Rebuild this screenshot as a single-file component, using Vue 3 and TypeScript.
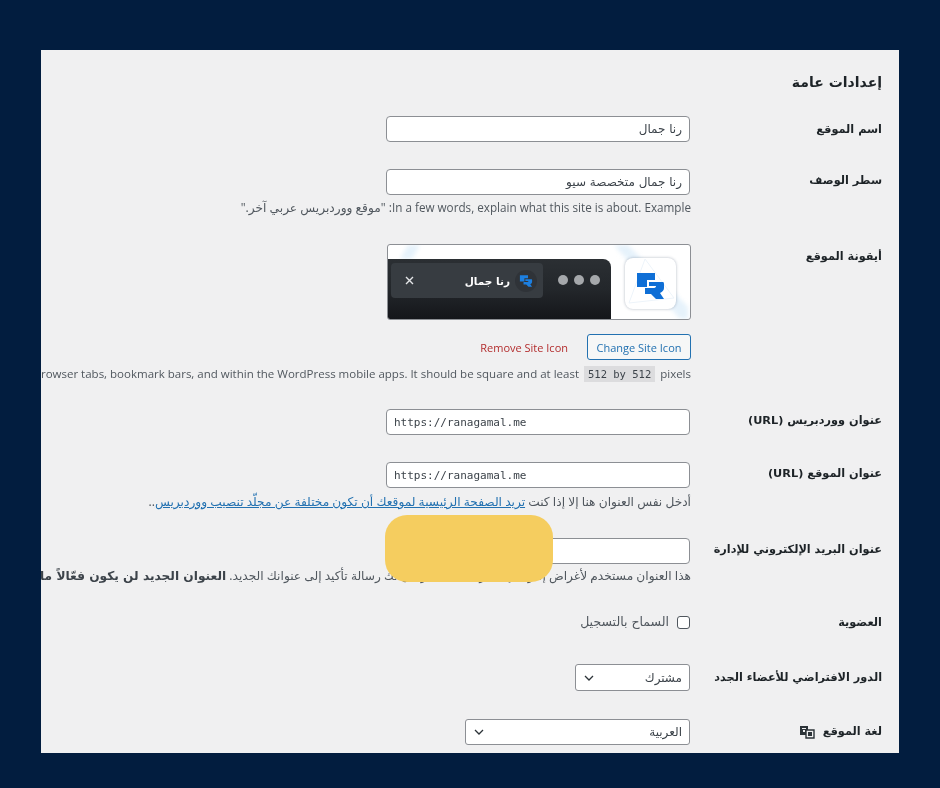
<script setup lang="ts">
const siteUrl = 'https://ranagamal.me'
</script>

<template>
  <div class="page">
    <main class="panel" dir="rtl">
      <h2 class="title">إعدادات عامة</h2>

      <div class="row row-name">
        <label class="label">اسم الموقع</label>
        <div class="field"><input class="input" value="رنا جمال" /></div>
      </div>

      <div class="row row-tagline">
        <label class="label">سطر الوصف</label>
        <div class="field">
          <input class="input" value="رنا جمال متخصصة سيو" />
          <p class="desc"><span class="latin wide">In a few words, explain what this site is about. Example</span>: "موقع ووردبريس عربي آخر."</p>
        </div>
      </div>

      <div class="row row-icon">
        <label class="label">أيقونة الموقع</label>
        <div class="field">
          <div class="preview">
            <svg class="swoosh" width="302" height="74" viewBox="0 0 302 74">
              <path fill="#e6f2fb" d="M20 0h12l-8 14H12zM226 0h14l60 62v12h-8z" />
            </svg>
            <div class="app-icon">
              <svg width="51" height="51" viewBox="0 0 51 51">
                <path fill="none" stroke="#edf4fa" d="M20 1L49 40 4 45z" />
                <path fill="#0f6fd6" d="M12 15H30V22H22V29H12Z" />
                <path fill="#0f6fd6" d="M24 24H38Q39 24 39 26V30Q39 33 35 35L39 41H31L26 36H20V30H28Q31 30 31 28H24Z" />
              </svg>
            </div>
            <div class="browser">
              <div class="dots"><i></i><i></i><i></i></div>
              <div class="tab">
                <span class="fav">
                  <svg width="14" height="14" viewBox="10 13 31 30">
                    <path fill="#1c7fe0" d="M12 15H30V22H22V29H12Z" />
                    <path fill="#1c7fe0" d="M24 24H38Q39 24 39 26V30Q39 33 35 35L39 41H31L26 36H20V30H28Q31 30 31 28H24Z" />
                  </svg>
                </span>
                <span class="tab-title">رنا جمال</span>
                <svg class="close" width="9" height="9" viewBox="0 0 9 9">
                  <path d="M1 1l7 7M8 1L1 8" stroke="#e4e6e8" stroke-width="1.4" fill="none" />
                </svg>
              </div>
            </div>
          </div>
          <div class="actions">
            <button class="btn" type="button">Change Site Icon</button>
            <button class="remove" type="button">Remove Site Icon</button>
          </div>
          <p class="desc desc-icon">
            <span class="latin" dir="ltr">The Site Icon is what you see in browser tabs, bookmark bars, and within the WordPress mobile apps. It should be square and at least <code>512 by 512</code> pixels</span>
          </p>
        </div>
      </div>

      <div class="row row-wp">
        <label class="label">عنوان ووردبريس (URL)</label>
        <div class="field"><input class="input mono" dir="ltr" :value="siteUrl" /></div>
      </div>

      <div class="row row-site">
        <label class="label">عنوان الموقع (URL)</label>
        <div class="field">
          <input class="input mono" dir="ltr" :value="siteUrl" />
          <p class="desc desc-site">أدخل نفس العنوان هنا إلا إذا كنت <a href="#">تريد الصفحة الرئيسية لموقعك أن تكون مختلفة عن مجلّد تنصيب ووردبريس</a>..</p>
        </div>
      </div>

      <div class="row row-email">
        <label class="label">عنوان البريد الإلكتروني للإدارة</label>
        <div class="field">
          <div class="email-wrap">
            <input class="input" />
            <div class="mask"></div>
          </div>
          <p class="desc desc-email">هذا العنوان مستخدم لأغراض إدارية. إذا غيّرت هذا، سنرسل لك رسالة تأكيد إلى عنوانك الجديد. <strong>العنوان الجديد لن يكون فعّالاً ما لم يتم تأكيده.</strong></p>
        </div>
      </div>

      <div class="row row-member">
        <label class="label">العضوية</label>
        <div class="field">
          <label class="check"><span class="box"></span>السماح بالتسجيل</label>
        </div>
      </div>

      <div class="row row-role">
        <label class="label">الدور الافتراضي للأعضاء الجدد</label>
        <div class="field">
          <div class="select select-role">
            <span>مشترك</span>
            <svg width="12" height="12" viewBox="0 0 12 12"><path d="M2 4l4 4 4-4" stroke="#2c3338" stroke-width="1.3" fill="none" /></svg>
          </div>
        </div>
      </div>

      <div class="row row-lang">
        <label class="label">لغة الموقع
          <svg class="lang-icon" width="16" height="14" viewBox="0 0 16 14">
            <path fill="#2c3338" d="M1 1h8v9H1z" />
            <path fill="#f0f0f1" d="M3 3h4v1H3zM4 5h2v2H4z" />
            <path fill="#f0f0f1" stroke="#2c3338" stroke-width="1.4" d="M7 5h8v8H7z" />
            <path fill="#2c3338" d="M9 7h4v4H9z" />
          </svg>
        </label>
        <div class="field">
          <div class="select select-lang">
            <span>العربية</span>
            <svg width="12" height="12" viewBox="0 0 12 12"><path d="M2 4l4 4 4-4" stroke="#2c3338" stroke-width="1.3" fill="none" /></svg>
          </div>
        </div>
      </div>
    </main>
  </div>
</template>

<style>
html, body { margin: 0; background: #021d3f; }
</style>

<style scoped>
.page {
  width: 940px;
  height: 788px;
  padding: 50px 41px 35px;
  box-sizing: border-box;
  background: #021d3f;
  overflow: hidden;
}
.panel {
  height: 703px;
  background: #f0f0f1;
  overflow: hidden;
  padding: 23px 17px 0 0;
  box-sizing: border-box;
  font-family: "Open Sans", "DejaVu Sans", sans-serif;
  color: #3c434a;
  font-size: 12px;
  filter: blur(.3px);
}
.title {
  margin: 0;
  font: 700 14px/19px "DejaVu Sans", sans-serif;
  color: #1d2327;
  height: 19px;
}
.row { display: flex; align-items: flex-start; }
.label {
  width: 192px;
  flex: none;
  font: 700 11.3px/16px "DejaVu Sans", sans-serif;
  color: #1d2327;
  white-space: nowrap;
}
.field {
  flex: none;
  width: 304px;
  min-width: 0;
}
.row-name { margin-top: 24px; }
.row-name .label { padding-top: 6px; }
.row-tagline { margin-top: 27px; }
.row-tagline .label { padding-top: 4px; }
.row-icon { margin-top: 29px; }
.row-icon .label { padding-top: 5px; }
.row-wp { margin-top: 28px; }
.row-wp .label { padding-top: 4px; }
.row-site { margin-top: 27px; }
.row-site .label { padding-top: 4px; }
.row-email { margin-top: 29px; }
.row-email .label { padding-top: 4px; }
.row-member { margin-top: 30px; }
.row-member .label { padding-top: 1px; }
.row-role { margin-top: 33px; }
.row-role .label { padding-top: 6px; }
.row-lang { margin-top: 28px; }
.row-lang .label { padding-top: 5px; display: flex; align-items: center; gap: 8px; }
.input {
  display: block;
  width: 304px;
  height: 26px;
  box-sizing: border-box;
  border: 1px solid #8c8f94;
  border-radius: 4px;
  background: #fff;
  padding: 0 7px;
  margin: 0;
  font: 12px "DejaVu Sans", sans-serif;
  color: #3c434a;
  outline: none;
}
.input.mono {
  font: 11px "DejaVu Sans Mono", "Liberation Mono", monospace;
  text-align: left;
}
.desc {
  margin: 5px -1px 0 0;
  line-height: 15px;
  font-size: 12.2px;
  white-space: nowrap;
  color: #50575e;
  font-family: "Open Sans", "DejaVu Sans", sans-serif;
}
.latin { font-size: 11.5px; }
.latin.wide { font-size: 11.7px; }
.desc a { color: #2271b1; text-decoration: underline; }
.desc strong { font-weight: 700; color: #3c434a; font-family: "DejaVu Sans", sans-serif; }
.desc code {
  background: #dcdcde;
  padding: 2px 4px;
  margin: 0 2px;
  font: 10.5px "DejaVu Sans Mono", monospace;
  color: #3c434a;
}
.preview {
  height: 76px;
  box-sizing: border-box;
  border: 1px solid #8c8f94;
  border-radius: 3px;
  background: #fff;
  display: flex;
  overflow: hidden;
  position: relative;
  margin: 0 -1px 0 1px;
}
.swoosh { position: absolute; left: 0; top: 0; filter: blur(2px); }
.app-icon {
  position: relative;
  flex: none;
  width: 51px;
  height: 51px;
  margin: 13px 14px 0 14px;
  border-radius: 8px;
  background: #fff;
  box-shadow: 0 0 3px rgba(30, 50, 80, .35);
  overflow: hidden;
}
.app-icon svg { display: block; }
.browser {
  position: relative;
  flex: 1;
  margin-top: 14px;
  background: linear-gradient(#2b2f33 0, #23272b 50%, #14161a 100%);
  border-top-right-radius: 8px;
  display: flex;
  align-items: flex-start;
  padding: 4px 11px 0 3px;
}
.dots { display: flex; gap: 6px; padding-top: 12px; margin-left: 15px; flex: none; }
.dots i { width: 10px; height: 10px; border-radius: 50%; background: #a5a8ab; display: block; }
.tab {
  flex: 1;
  height: 35px;
  border-radius: 4px;
  background: #373c41;
  display: flex;
  align-items: center;
  padding: 0 6px 0 14px;
  gap: 5px;
}
.fav {
  width: 22px;
  height: 22px;
  border-radius: 50%;
  background: #2f3338;
  display: flex;
  align-items: center;
  justify-content: center;
  flex: none;
}
.tab-title { font: 700 10.5px "DejaVu Sans", sans-serif; color: #fff; flex: 1; }
.actions { display: flex; align-items: center; gap: 19px; margin: 14px -1px 0 1px; }
.btn {
  width: 104px;
  height: 26px;
  box-sizing: border-box;
  border: 1px solid #2271b1;
  border-radius: 3px;
  background: #f6f7f7;
  color: #2271b1;
  padding: 0;
  font: 11px "Open Sans", sans-serif;
}
.remove {
  border: 0;
  background: none;
  padding: 0;
  color: #b32d2e;
  font: 11px "Open Sans", sans-serif;
}
.desc-icon { margin-top: 6px; }
.desc-site { margin-top: 6px; }
.desc-email { margin-top: 4px; }
.check { display: flex; align-items: center; gap: 8px; white-space: nowrap; font: 12.5px/16px "DejaVu Sans", sans-serif; color: #50575e; }
.box {
  width: 13px;
  height: 13px;
  box-sizing: border-box;
  border: 1px solid #50575e;
  border-radius: 3px;
  background: #fff;
  flex: none;
}
.email-wrap { position: relative; }
.mask {
  position: absolute;
  left: -1px;
  top: -23px;
  width: 168px;
  height: 67px;
  border-radius: 22px;
  background: #f5cd5f;
  z-index: 2;
}
.select {
  height: 26px;
  box-sizing: border-box;
  border: 1px solid #8c8f94;
  border-radius: 3px;
  background: #fff;
  display: flex;
  align-items: center;
  justify-content: space-between;
  padding: 0 7px;
  font: 12px "DejaVu Sans", sans-serif;
  color: #3c434a;
}
.select-role { width: 115px; height: 27px; }
.select-lang { width: 225px; }
.lang-icon { flex: none; }
</style>
